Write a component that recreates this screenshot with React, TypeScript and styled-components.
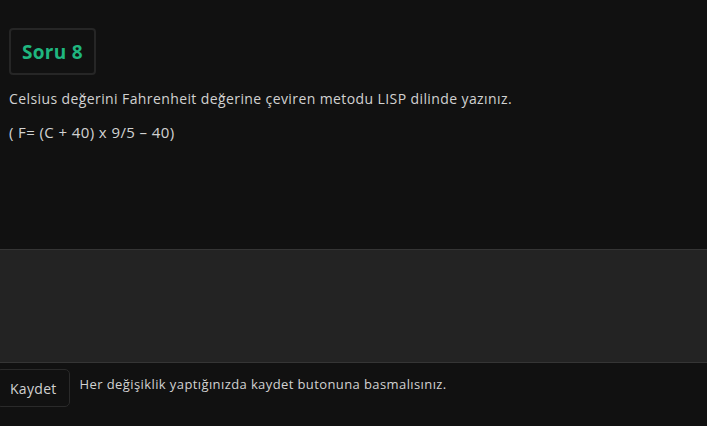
import React from "react";
import styled, { createGlobalStyle } from "styled-components";

const Global = createGlobalStyle`
  html, body { margin: 0; padding: 0; background: #111111; }
  body { font-family: "Open Sans", "Liberation Sans", sans-serif; color: #cfcfcf; }
  #root { width: 707px; height: 426px; overflow: hidden; }
`;

const Page = styled.div`
  width: 707px;
  height: 426px;
  display: flex;
  flex-direction: column;
  background: #111111;
`;

const Question = styled.section`
  padding: 28px 9px 0 9px;
  height: 221px;
  display: flex;
  flex-direction: column;
  align-items: flex-start;
`;

const Badge = styled.div`
  box-sizing: border-box;
  height: 47px;
  padding: 0 11px;
  display: flex;
  align-items: center;
  border: 2px solid #262626;
  border-radius: 4px;
  color: #1fb67f;
  font-size: 19px;
  font-weight: 700;
  letter-spacing: 0.3px;
`;

const Line = styled.p<{ $top: number; $size: number }>`
  margin: ${(p) => p.$top}px 0 0 0;
  font-size: ${(p) => p.$size}px;
  letter-spacing: 0.4px;
  line-height: 20px;
  color: #d2d2d2;
  white-space: nowrap;
`;

const Editor = styled.div`
  height: 112px;
  background: #232323;
  border-top: 1px solid #353535;
  border-bottom: 1px solid #353535;
`;

const Footer = styled.div`
  display: flex;
  align-items: flex-start;
  gap: 10px;
  padding-top: 6px;
`;

const SaveButton = styled.button`
  box-sizing: border-box;
  margin-left: -4px;
  height: 38px;
  padding: 0 12px 0 13px;
  background: #111111;
  border: 1px solid #2a2a2a;
  border-radius: 5px;
  color: #d0d0d0;
  font-family: inherit;
  font-size: 14px;
  letter-spacing: 0.3px;
`;

const Hint = styled.span`
  margin-top: 6px;
  font-size: 13px;
  letter-spacing: 0.4px;
  color: #d2d2d2;
`;

export default function App() {
  return (
    <>
      <Global />
      <Page>
        <Question>
          <Badge>Soru 8</Badge>
          <Line $top={14} $size={14}>Celsius değerini Fahrenheit değerine çeviren metodu LISP dilinde yazınız.</Line>
          <Line $top={13} $size={15}>( F= (C + 40) x 9/5 – 40)</Line>
        </Question>
        <Editor />
        <Footer>
          <SaveButton>Kaydet</SaveButton>
          <Hint>Her değişiklik yaptığınızda kaydet butonuna basmalısınız.</Hint>
        </Footer>
      </Page>
    </>
  );
}
